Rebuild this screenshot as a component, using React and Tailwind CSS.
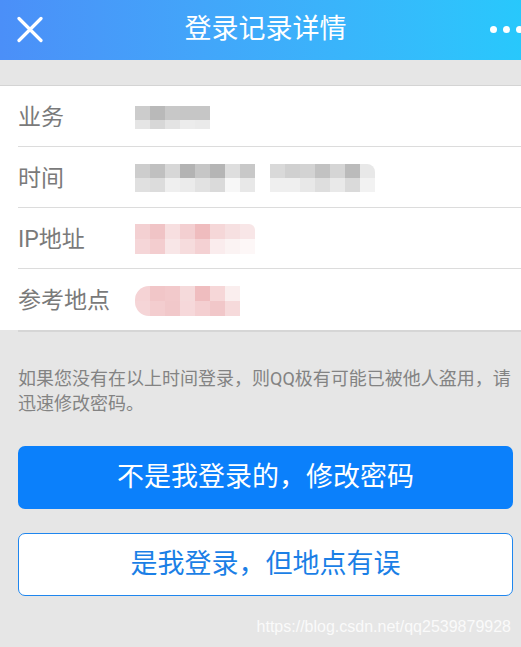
import React from "react";

const ywTop = ["#cccccc", "#b9b9b9", "#c8c8c8", "#c6c6c6", "#c6c6c6"];
const ywBot = ["#e5e5e5", "#d7d7d7", "#e3e3e3", "#ececec", "#eaeaea"];
const t1Top = ["#cdcdcd", "#c0c0c0", "#d7d7d7", "#b3b3b3", "#c6c6c6", "#b5b5b5", "#dedede", "#c8c8c8"];
const t1Bot = ["#e0e0e0", "#dcdcdc", "#efefef", "#ebebeb", "#e2e2e2", "#dadada", "#f7f7f7", "#e8e8e8"];
const t2Top = ["#d9d9d9", "#d0d0d0", "#d3d3d3", "#c2c2c2", "#d5d5d5", "#bbbbbb", "#e8e8e8"];
const t2Bot = ["#efefef", "#efefef", "#e8e8e8", "#dedede", "#e9e9e9", "#dadada", "#f2f2f2"];
const ipTop = ["#f3d0d2", "#f0c4c6", "#f7dfe0", "#f3cfd1", "#efbcbe", "#f5d7d8", "#f6e0e1", "#f8e6e7"];
const ipBot = ["#f5d6d8", "#f3cdcf", "#f8e6e7", "#f6dcdd", "#f4d1d3", "#faeced", "#fbf3f3", "#fdf7f7"];
const dTop = ["#f5d3d5", "#f1c6c8", "#f2c9cb", "#f5dadb", "#efbdbf", "#f6d7d8", "#faeeee"];
const dBot = ["#f5d5d7", "#f3cdcf", "#f1c8ca", "#f6d8da", "#f4cfd1", "#f1c7c9", "#f6dadb"];

function Mosaic({ top, bot, topH, botH, className = "" }) {
  return (
    <div className={"flex flex-col overflow-hidden " + className}>
      <div className="flex">
        {top.map((c, i) => (
          <div key={i} className="w-[15px]" style={{ background: c, height: topH }} />
        ))}
      </div>
      <div className="flex">
        {bot.map((c, i) => (
          <div key={i} className="w-[15px]" style={{ background: c, height: botH }} />
        ))}
      </div>
    </div>
  );
}

function Row({ label, children, last }) {
  return (
    <div className="flex h-[61px] items-center pl-[18px]">
      <div
        className={
          "flex h-full flex-1 items-center " +
          (last ? "" : "border-b border-[#dcdcdc]")
        }
      >
        <div className="w-[117px] pt-[2px] text-[23px] leading-none text-[#7a7a7a]">{label}</div>
        {children}
      </div>
    </div>
  );
}

export default function App() {
  return (
    <div className="h-[647px] w-[521px] overflow-hidden bg-[#e6e6e6] font-[Roboto,'Noto_Sans_CJK_SC',sans-serif]">
      {/* Header */}
      <div className="flex h-[60px] items-center overflow-hidden bg-gradient-to-r from-[#4b8ff8] to-[#28c8fc]">
        <div className="flex w-[60px] items-center pl-[17px] pb-[1px]">
          <svg width="26" height="27" viewBox="0 0 26 27">
            <path d="M2 2.5 L24 24.5 M24 2.5 L2 24.5" stroke="#fff" strokeWidth="3.2" strokeLinecap="round" />
          </svg>
        </div>
        <div className="flex-1 text-center text-[27px] leading-none text-white pb-[2px]">登录记录详情</div>
        <div className="flex w-[50px] items-center gap-[6px] pl-[19px] pb-[1px]">
          <div className="h-[7px] w-[7px] shrink-0 rounded-full bg-white" />
          <div className="h-[7px] w-[7px] shrink-0 rounded-full bg-white" />
          <div className="h-[7px] w-[7px] shrink-0 rounded-full bg-white" />
        </div>
      </div>

      {/* List */}
      <div className="mt-[25px] border-t border-[#d4d4d4] bg-white">
        <Row label="业务">
          <Mosaic top={ywTop} bot={ywBot} topH={14} botH={9} className="mt-[2px]" />
        </Row>
        <Row label="时间">
          <div className="mt-[2px] flex items-center gap-[15px]">
            <Mosaic top={t1Top} bot={t1Bot} topH={14} botH={14} />
            <Mosaic top={t2Top} bot={t2Bot} topH={14} botH={14} className="rounded-tr-[8px]" />
          </div>
        </Row>
        <Row label="IP地址">
          <Mosaic top={ipTop} bot={ipBot} topH={15} botH={15} className="mt-[2px] rounded-tr-[6px]" />
        </Row>
        <Row label="参考地点" last>
          <Mosaic top={dTop} bot={dBot} topH={15} botH={15} className="mt-[2px] rounded-l-[14px]" />
        </Row>
      </div>
      <div className="ml-[18px] h-[2px] bg-[#d6d6d6]" />

      {/* Note */}
      <div className="mt-[34px] pl-[18px] text-[18px] leading-[25px] text-[#838383]">
        <div className="whitespace-nowrap">如果您没有在以上时间登录，则QQ极有可能已被他人盗用，请</div>
        <div className="whitespace-nowrap">迅速修改密码。</div>
      </div>

      {/* Buttons */}
      <div className="mt-[30px] flex flex-col gap-[24px] pr-[8px] pl-[18px]">
        <div className="flex h-[63px] items-center justify-center rounded-[7px] bg-[#0b80fb] text-[27px] text-white">
          不是我登录的，修改密码
        </div>
        <div className="flex h-[63px] items-center justify-center rounded-[7px] border-[1.5px] border-[#1f86ee] bg-white text-[27px] text-[#1b7fe6]">
          是我登录，但地点有误
        </div>
      </div>

      <div className="mt-[23px] pr-[10px] text-right font-['Liberation_Sans',sans-serif] text-[16px] leading-none text-[#fafafa]">
        https://blog.csdn.net/qq2539879928
      </div>
    </div>
  );
}
